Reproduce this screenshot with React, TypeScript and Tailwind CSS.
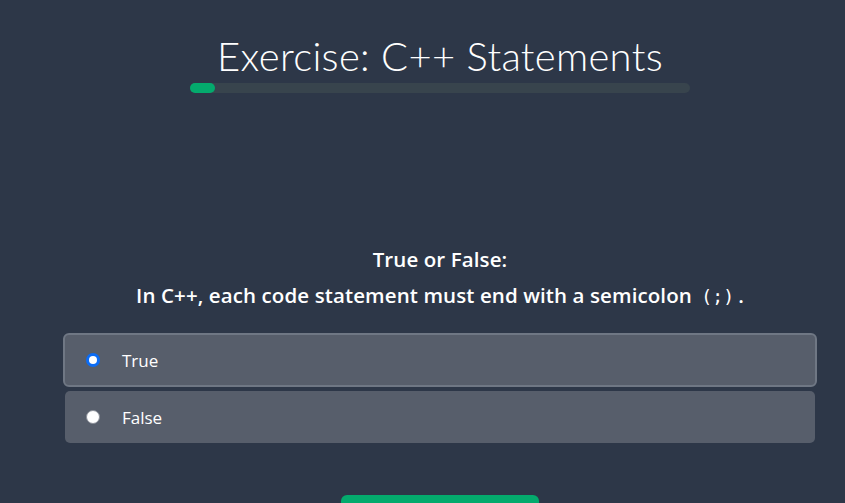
import React, { useState } from 'react'

const options = ['True', 'False']

export default function App() {
  const [picked, setPicked] = useState(0)
  return (
    <div className="h-[503px] w-full overflow-hidden bg-[#2d3748] font-['Open_Sans','Noto_Sans',sans-serif] text-white">
      <div className="ml-[63px] mr-[28px] flex flex-col items-center">
        <h1 className="mt-[30px] font-['Lato','Open_Sans',sans-serif] text-[40px] font-light leading-[52px] tracking-[0.3px] text-white">
          Exercise: C++ Statements
        </h1>
        <div className="mt-[1px] h-[10px] w-[500px] rounded-full bg-[#38444d]">
          <div className="h-full w-[25px] rounded-full bg-[#04aa6d]" />
        </div>

        <div className="mt-[148px] text-center text-[20.5px] font-semibold leading-[36px] tracking-[0.1px]">
          <p>True or False:</p>
          <p>
            In C++, each code statement must end with a semicolon{' '}
            <code className="mx-[4px] font-['DejaVu_Sans_Mono',monospace] text-[18px] font-normal">(;)</code>.
          </p>
        </div>

        <div className="mt-[18px] flex w-full flex-col gap-[4px]">
          {options.map((o, i) => (
            <label
              key={o}
              onClick={() => setPicked(i)}
              className={
                i === picked
                  ? 'flex h-[54px] w-full cursor-pointer items-center rounded-[6px] border-2 border-[#6f7784] bg-[#575e6b] pl-[21px]'
                  : 'mx-[2px] flex h-[52px] cursor-pointer items-center rounded-[5px] bg-[#575e6b] pl-[21px]'
              }
            >
              <span
                className={
                  i === picked
                    ? 'flex h-[14px] w-[14px] items-center justify-center rounded-full bg-[#0b6cf5]'
                    : 'h-[14px] w-[14px] rounded-full border border-[#8a8f98] bg-white'
                }
              >
                {i === picked && <span className="h-[8px] w-[8px] rounded-full bg-white" />}
              </span>
              <span className="ml-[22px] text-[17px] leading-none">{o}</span>
            </label>
          ))}
        </div>

        <button aria-label="Submit Answer" className="mt-[52px] h-[44px] w-[198px] shrink-0 rounded-[6px] bg-[#04aa6d]" />
      </div>
    </div>
  )
}
